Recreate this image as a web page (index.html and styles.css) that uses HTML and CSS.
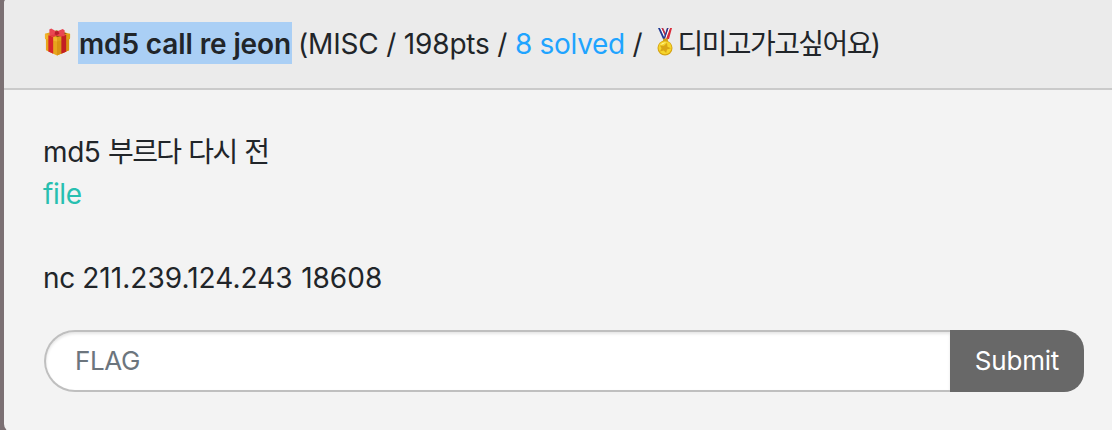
FILE: index.html
```html
<!DOCTYPE html>
<html lang="ko">
<head>
<meta charset="utf-8">
<title>md5 call re jeon</title>
<link rel="stylesheet" href="styles.css">
</head>
<body>
<main class="card">
  <header class="card-header">
    <svg class="gift" viewBox="0 0 28 28" aria-hidden="true">
      <path fill="#e8a51c" d="M1 5.5 13 2l14 3.5v5l-1 1v11L13.5 28 2 22.500v-11L1 10.500z"/>
      <path fill="#8b5a13" d="M6 4 13 2l11 3-10 4z"/>
      <path fill="#d99412" d="M13.500 12 26 8.500v14L13.500 28z"/>
      <path fill="#f0b52c" d="m1 5.500 12.500 4v4L1 10.500z"/>
      <path fill="#dda018" d="m13.500 9.500 13.500-4v5l-13.500 3z"/>
      <path fill="#d8252b" d="m4.500 7 5 1.500v17.800l-5-2.400z"/>
      <path fill="#c31e23" d="m18 8 5-1.500v17.600L18 26.200z"/>
      <path fill="#e33a43" d="m5 7 7-2 11 1.500-5 2-5-1-3 1.300z"/>
      <path fill="#e94752" d="m13 3-5.500-3L5.500 1l.3 6 6.700-1 2 1.200L21 8l.5-6-2-1.500z"/>
      <path fill="#b91e2c" d="m11.500 3 3-.5 1.500 3-3 1.500-2-1z"/>
    </svg>
    <strong class="title"><span>md5 call re jeon</span></strong>
    <span class="meta">(MISC / 198pts / <a class="solved">8 solved</a> /</span>
    <svg class="medal" viewBox="0 0 18 28" aria-hidden="true">
      <path fill="#223c94" d="M2 0h5l5 11H7z"/>
      <path fill="#fff" d="M4 0h1.500l5 11H9z"/>
      <path fill="#d92d3b" d="M5.500 0H7l5 11h-1.500z"/>
      <path fill="#d92d3b" d="M11 0h5l-3 11H8z"/>
      <path fill="#fff" d="M12.500 0H14l-4 11H8.500z"/>
      <path fill="#223c94" d="M11 0h1.500L9 11H7.500z"/>
      <rect x="7" y="10.500" width="5" height="3" rx="1" fill="#d2a11a"/>
      <circle cx="9" cy="20" r="7.500" fill="#d6a414"/>
      <circle cx="9" cy="19.700" r="6.500" fill="#f6d52c"/>
      <path fill="#d9a516" d="m4 17.500 4 .3 3-3 .5 4 3.500 1.500-4 1.200-.8 3.500-2.500-2.600-3.700 1 1.500-3.200z"/>
      <path fill="#fff18a" d="M4 17q2-3 6-2.800l-3 2z"/>
    </svg>
    <span class="solver">디미고가고싶어요)</span>
  </header>
  <section class="card-body">
    <p class="line">md5 <span class="korean">부르다 다시 전</span></p>
    <p class="line"><a class="file">file</a></p>
    <p class="line gap">nc <span class="address">211.239.124.243</span> <span class="port">18608</span></p>
    <form class="flag-form">
      <input class="flag" type="text" placeholder="FLAG" aria-label="FLAG">
      <button class="submit" type="button">Submit</button>
    </form>
  </section>
</main>
</body>
</html>
```
FILE: styles.css
```css
* { box-sizing: border-box; }
body {
  margin: 0;
  height: 430px;
  overflow: hidden;
  background: #7b7073;
  color: #212529;
  font: 28px/42px Inter, "Noto Sans CJK KR", sans-serif;
}
.card {
  height: 436px;
  margin: -4px -12px 0 4px;
  border-radius: 8px;
  overflow: hidden;
  background: #f3f3f3;
}
.card-header {
  display: flex;
  align-items: center;
  height: 94px;
  padding: 2px 0 0 40px;
  border-bottom: 2px solid #cacaca;
  background: #ebebeb;
  white-space: nowrap;
}
.gift { width: 27px; height: 28px; margin-top: -2px; }
.title {
  width: 214px;
  height: 42px;
  margin-left: 7px;
  padding-left: 1px;
  background: #aacff5;
  font-weight: 600;
  line-height: 44px;
  letter-spacing: -0.120px;
}
.meta { margin: 2px 0 0 6px; letter-spacing: -0.180px; }
.solved { letter-spacing: -0.300px; color: #1fa4ff; }
.medal { width: 18px; height: 28px; margin: -2px 0 0 13px; }
.solver { margin: 2px 0 0 4px; letter-spacing: -1.600px; }
.card-body { padding: 41px 40px 0 39px; }
.line { margin: 0; height: 42px; letter-spacing: -0.400px; white-space: nowrap; }
.korean { letter-spacing: -1.600px; word-spacing: 1.500px; }
.address { letter-spacing: 0.040px; }
.port { letter-spacing: 0; margin-left: 1px; }
.gap { margin-top: 42px; }
.file { color: #27bfb0; }
.flag-form { display: flex; width: 1040px; height: 62px; margin: 31px 0 0 1px; }
.flag {
  width: 906px;
  height: 62px;
  margin: 0;
  padding: 0 29px 2px;
  border: 2px solid #bfbfbf;
  border-right: 0;
  border-radius: 31px 0 0 31px;
  background: #fff;
  box-shadow: inset 0 2px 3px rgba(0, 0, 0, .1);
  font: 26px Inter, sans-serif;
  letter-spacing: -0.400px;
}
.flag::placeholder { color: #6c757d; opacity: 1; }
.submit {
  width: 134px;
  height: 62px;
  margin: 0;
  padding: 0 0 2px;
  border: 0;
  border-radius: 0 20px 20px 0;
  background: #686868;
  color: #fff;
  font: 26px Inter, sans-serif;
  letter-spacing: -0.200px;
}
```
